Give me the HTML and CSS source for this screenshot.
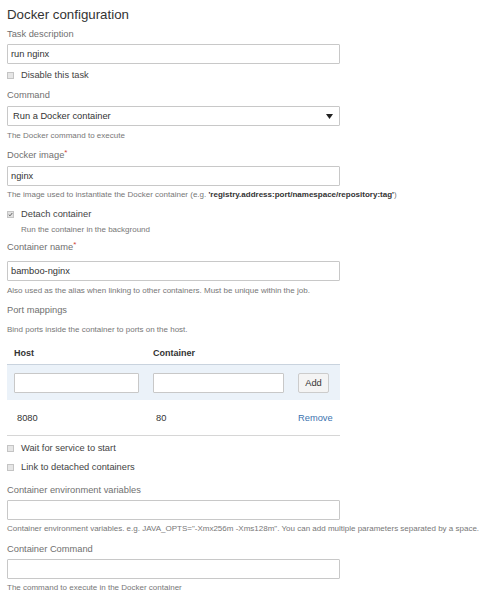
FILE: index.html
```html
<!DOCTYPE html>
<html>
<head>
<meta charset="utf-8">
<link rel="stylesheet" href="styles.css">
</head>
<body>
<div class="page">
  <h1 class="title">Docker configuration</h1>

  <div class="label mt2">Task description</div>
  <input class="field mt3" type="text" value="run nginx">

  <div class="check mt4"><span class="cb"></span><span>Disable this task</span></div>

  <div class="label mt6">Command</div>
  <div class="select mt4"><span>Run a Docker container</span>
    <svg class="arrow" width="7" height="5" viewBox="0 0 7 5"><path d="M0 0H7L3.5 5Z" fill="#222"/></svg>
  </div>
  <div class="help mt4">The Docker command to execute</div>

  <div class="label mt6">Docker image<span class="req">*</span></div>
  <input class="field mt3" type="text" value="nginx">
  <div class="help mt3">The image used to instantiate the Docker container (e.g. <b>'registry.address:port/namespace/repository:tag'</b>)</div>

  <div class="check mt6"><span class="cb checked"><svg width="7" height="7" viewBox="0 0 7 7"><path d="M1 3.6L2.8 5.4L6 1.4" fill="none" stroke="#666" stroke-width="1.4"/></svg></span><span>Detach container</span></div>
  <div class="help sub mt3">Run the container in the background</div>

  <div class="label mt4">Container name<span class="req">*</span></div>
  <input class="field mt6" type="text" value="bamboo-nginx">
  <div class="help mt4">Also used as the alias when linking to other containers. Must be unique within the job.</div>

  <div class="label mt6">Port mappings</div>
  <div class="help mt7">Bind ports inside the container to ports on the host.</div>

  <table class="ports">
    <thead>
      <tr><th class="c1">Host</th><th class="c2">Container</th><th class="c3"></th></tr>
    </thead>
    <tbody>
      <tr class="addrow">
        <td class="c1"><input class="field" type="text"></td>
        <td class="c2"><input class="field" type="text"></td>
        <td class="c3"><button class="btn">Add</button></td>
      </tr>
      <tr class="datarow">
        <td class="c1"><span class="val">8080</span></td>
        <td class="c2"><span class="val">80</span></td>
        <td class="c3"><a class="link">Remove</a></td>
      </tr>
    </tbody>
  </table>

  <div class="check mt5"><span class="cb"></span><span>Wait for service to start</span></div>
  <div class="check mt5"><span class="cb"></span><span>Link to detached containers</span></div>

  <div class="label mt9">Container environment variables</div>
  <input class="field mt3" type="text">
  <div class="help mt3">Container environment variables. e.g. JAVA_OPTS="-Xmx256m -Xms128m". You can add multiple parameters separated by a space.</div>

  <div class="label mt7">Container Command</div>
  <input class="field mt3" type="text">
  <div class="help mt3">The command to execute in the Docker container</div>
</div>
</body>
</html>
```
FILE: styles.css
```css
html, body {
  margin: 0;
  padding: 0;
  background: #fff;
}
body {
  font-family: "Liberation Sans", Arial, sans-serif;
  color: #333;
}
.page {
  padding: 5px 0 0 7px;
  width: 333px;
}
.title {
  margin: 0;
  font-size: 13.3px;
  font-weight: normal;
  line-height: 20px;
  color: #333;
}
.label {
  font-size: 9.3px;
  line-height: 14px;
  color: #707070;
  white-space: nowrap;
}
.req {
  color: #d04437;
  position: relative;
  top: -3px;
  font-size: 8px;
}
.field {
  display: block;
  box-sizing: border-box;
  width: 333px;
  height: 20px;
  margin-left: 0;
  margin-right: 0;
  margin-bottom: 0;
  padding: 0 3px;
  border: 1px solid #c8c8c8;
  border-radius: 1px;
  background: #fff;
  font-family: "Liberation Sans", Arial, sans-serif;
  font-size: 9.3px;
  color: #333;
  outline: none;
}
.select {
  box-sizing: border-box;
  width: 333px;
  height: 20px;
  border: 1px solid #c8c8c8;
  border-radius: 1px;
  display: flex;
  align-items: center;
  justify-content: space-between;
  padding: 0 6px 0 5px;
  font-size: 9.3px;
  color: #333;
}
.arrow {
  display: block;
}
.help {
  font-size: 8px;
  line-height: 12px;
  color: #777;
  white-space: nowrap;
}
.help b {
  color: #333;
  font-weight: bold;
}
.help.sub {
  padding-left: 14px;
}
.check {
  display: flex;
  align-items: center;
  font-size: 9.3px;
  line-height: 14px;
  color: #444;
  white-space: nowrap;
}
.cb {
  box-sizing: border-box;
  width: 7px;
  height: 7px;
  margin: 0 7px 0 0;
  border: 1px solid #c4c4c4;
  background: #e6e6e6;
  display: flex;
  align-items: center;
  justify-content: center;
}
.cb svg {
  display: block;
}
.cb.checked {
  background: #e2e2e2;
}

.mt2 { margin-top: 2px; }
.mt3 { margin-top: 3px; }
.mt4 { margin-top: 4px; }
.mt5 { margin-top: 5px; }
.mt6 { margin-top: 6px; }
.mt7 { margin-top: 7px; }
.mt9 { margin-top: 9px; }

.ports {
  margin-top: 5px;
  width: 333px;
  border-collapse: collapse;
  table-layout: fixed;
}
.ports th {
  height: 23px;
  padding: 0 7px;
  text-align: left;
  font-size: 9px;
  font-weight: bold;
  color: #333;
  border-bottom: 1px solid #c9d3de;
  vertical-align: middle;
}
.ports .c1 { width: 125px; }
.ports .c2 { width: 131px; }
.ports .c3 { width: 35px; }
.ports td {
  padding: 0 7px;
  vertical-align: middle;
}
.ports .field {
  width: 100%;
}
.addrow td {
  background: #ebf2f9;
  height: 35px;
  padding-top: 0;
  padding-bottom: 0;
}
.datarow td {
  height: 35px;
  border-bottom: 1px solid #d6d6d6;
  font-size: 9.3px;
  color: #333;
}
.val {
  padding-left: 3px;
}
.btn {
  box-sizing: border-box;
  width: 31px;
  height: 20px;
  padding: 0;
  border: 1px solid #ccc;
  border-radius: 2px;
  background: #f4f4f4;
  font-family: "Liberation Sans", Arial, sans-serif;
  font-size: 9.3px;
  color: #333;
}
.link {
  color: #3b73af;
  font-size: 9.3px;
}
```
